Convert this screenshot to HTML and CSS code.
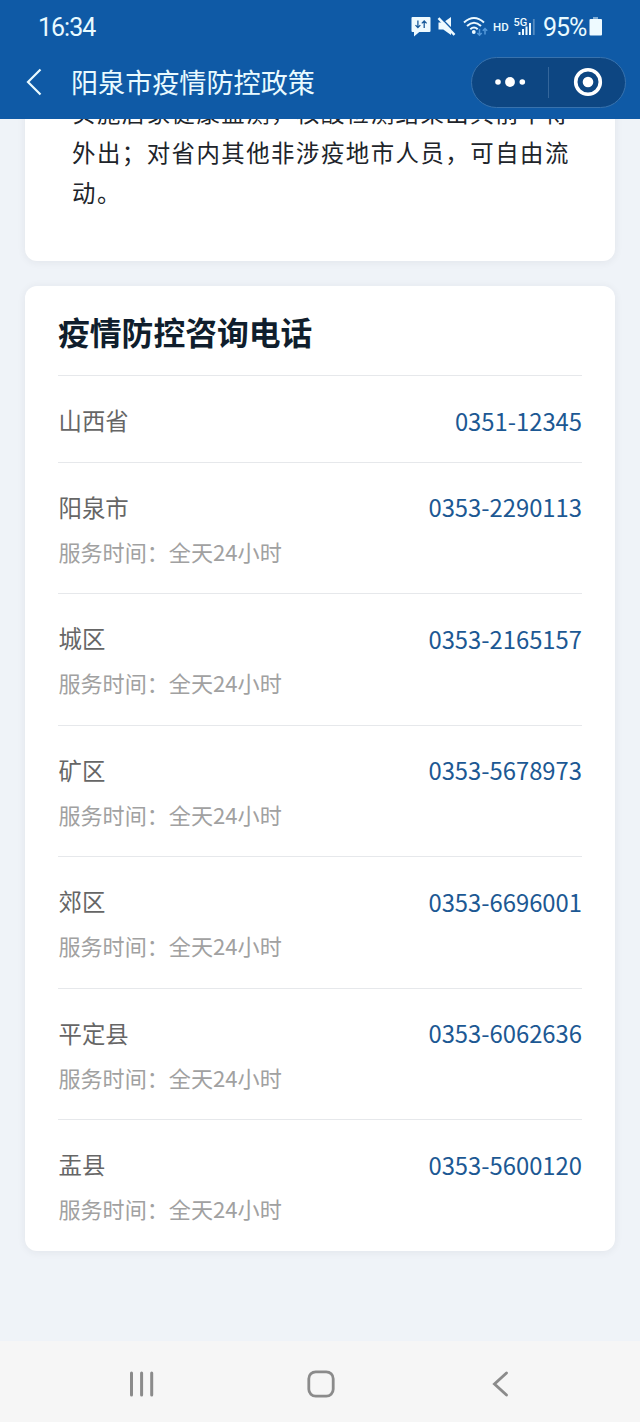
FILE: index.html
```html
<!DOCTYPE html>
<html lang="zh-CN">
<head>
<meta charset="utf-8">
<title>阳泉市疫情防控政策</title>
<link rel="stylesheet" href="styles.css">
</head>
<body>
<div class="screen">
  <header class="header">
    <div class="status">
      <span class="clock">16:34</span>
      <svg class="status-icon message" viewBox="0 0 20 20"><path d="M1.500 0h17q1 0 1 1v13q0 1-1 1H8.300L3 19.500V15H1.500q-1 0-1-1V1q0-1 1-1z" fill="#eefaff"/><path d="M6.900 3.500v7M4.500 8.100l2.400 2.500 2.400-2.500M13.200 11V4M10.800 6.400l2.400-2.500 2.400 2.500" fill="none" stroke="#195a9b" stroke-width="1.300"/></svg>
      <svg class="status-icon mute" viewBox="0 0 18 20"><path d="M.5 5.500h4.800L13 0v18l-7.700-5.500H.5z" fill="#eefaff"/><path d="M1.800-.2L18 16.200" stroke="#0f5aa6" stroke-width="1.600"/><path d="M.5 1.200l16 16.600" stroke="#eefaff" stroke-width="2.500"/></svg>
      <svg class="status-icon wifi" viewBox="0 0 26 20"><g fill="none" stroke="#eefaff" stroke-width="2"><path d="M1 5.500Q11-3.500 21 5.500M4 9q7-6.500 14 0M7.300 12.300q3.700-3.500 7.400 0"/></g><circle cx="10.800" cy="15" r="1.900" fill="#eefaff"/><path d="M16.500 12v6M14.300 16l2.200 2.200L18.700 16M22 17.500v-6M19.800 13.700L22 11.500l2.200 2.200" fill="none" stroke="#5599da" stroke-width="1.500"/></svg>
      <span class="hd">HD</span>
      <svg class="status-icon signal" viewBox="0 0 22 20"><text class="five-g" x="-.5" y="8.500">5G</text><path d="M5.500 15v3M9 12v6M12.500 9.500V18M16 6v12" stroke="#eefaff" stroke-width="2"/><path d="M19.800 2v16" stroke="#568cc0" stroke-width="1.800"/></svg>
      <span class="percent">95%</span>
      <svg class="status-icon battery" viewBox="0 0 14 20"><path d="M4 0h5v3H4z" fill="#82aed5"/><rect x=".5" y="2" width="12.500" height="16.500" rx="1" fill="#eefaff"/></svg>
    </div>
    <div class="nav">
      <svg class="back" viewBox="0 0 16 28"><path d="M14.500 1.500L2 14l12.500 12.500" fill="none" stroke="#e9faff" stroke-width="2.200"/></svg>
      <h1 class="nav-title">阳泉市疫情防控政策</h1>
      <div class="capsule">
        <svg class="more" viewBox="0 0 32 12"><g fill="#fff"><circle cx="4" cy="6" r="2.800"/><circle cx="16" cy="6" r="4.900"/><circle cx="28.300" cy="6" r="2.800"/></g></svg>
        <span class="divider"></span>
        <svg class="close" viewBox="0 0 30 30"><circle cx="15" cy="15" r="12.300" fill="none" stroke="#fff" stroke-width="3.600"/><circle cx="15" cy="15" r="5.300" fill="#fff"/></svg>
      </div>
    </div>
  </header>
  <main class="content">
    <section class="card policy">
      <p class="policy-text">实施居家健康监测，核酸检测结果出具前不得<br>外出；对省内其他非涉疫地市人员，可自由流<br>动。</p>
    </section>
    <section class="card contacts">
      <h2 class="card-title">疫情防控咨询电话</h2>
      <div class="row short"><span class="name">山西省</span><span class="phone">0351-12345</span></div>
      <div class="row"><span class="name">阳泉市</span><span class="phone">0353-2290113</span><span class="hours">服务时间：全天24小时</span></div>
      <div class="row"><span class="name">城区</span><span class="phone">0353-2165157</span><span class="hours">服务时间：全天24小时</span></div>
      <div class="row"><span class="name">矿区</span><span class="phone">0353-5678973</span><span class="hours">服务时间：全天24小时</span></div>
      <div class="row"><span class="name">郊区</span><span class="phone">0353-6696001</span><span class="hours">服务时间：全天24小时</span></div>
      <div class="row"><span class="name">平定县</span><span class="phone">0353-6062636</span><span class="hours">服务时间：全天24小时</span></div>
      <div class="row"><span class="name">盂县</span><span class="phone">0353-5600120</span><span class="hours">服务时间：全天24小时</span></div>
    </section>
  </main>
  <footer class="system-nav">
    <svg class="nav-icon" viewBox="0 0 30 30"><path d="M4.500 4v22M14.600 4v22M24.700 4v22" stroke="#8b8b8b" stroke-width="3" stroke-linecap="round"/></svg>
    <svg class="nav-icon" viewBox="0 0 30 30"><rect x="2.800" y="2.800" width="24.400" height="24.400" rx="7" fill="none" stroke="#8b8b8b" stroke-width="2.800"/></svg>
    <svg class="nav-icon" viewBox="0 0 30 30"><path d="M21.500 4L9.500 15l12 11" fill="none" stroke="#8b8b8b" stroke-width="2.900" stroke-linecap="round"/></svg>
  </footer>
</div>
</body>
</html>
```
FILE: styles.css
```css
* { box-sizing: border-box; }
body { margin: 0; font-family: "Noto Sans CJK SC", sans-serif; background: #eff3f8; }
h1, h2, p { margin: 0; }
svg { display: block; flex: none; overflow: visible; }
.screen { display: flex; flex-direction: column; width: 640px; height: 1422px; overflow: hidden; }
.header { flex: none; height: 119.4px; background: #0f5aa6; color: #e9faff; }
.status { display: flex; align-items: center; height: 54px; padding-left: 38px; font-family: Roboto, sans-serif; }
.clock { width: 373px; padding-top: 1px; font-size: 25px; line-height: 54px; letter-spacing: -1px; }
.status-icon { height: 20px; }
.message { width: 20px; }
.mute { width: 18px; margin-left: 7px; }
.wifi { width: 26px; margin-left: 7px; }
.hd { width: 16px; margin-left: 4px; font-size: 11.5px; font-weight: 500; }
.signal { width: 22px; margin-left: 5px; }
.five-g { font: 500 11px Roboto, sans-serif; fill: #eefaff; }
.percent { width: 43px; margin-left: 7px; font-size: 25px; letter-spacing: -1px; }
.battery { width: 14px; margin-left: 3px; }
.nav { display: flex; align-items: center; height: 56px; padding-left: 26px; }
.back { width: 16px; height: 28px; }
.nav-title { flex: 1; margin-left: 29px; font-size: 27.1px; font-weight: 400; line-height: 40px; white-space: nowrap; }
.capsule { display: flex; align-items: center; width: 155px; height: 51px; margin-right: 14px; padding-left: 22px; border: 1px solid #3872ad; border-radius: 26px; background: #0d4682; }
.more { width: 32px; height: 12px; }
.divider { width: 1px; height: 31px; margin: 0 24px 0 22px; background: #34669b; }
.close { width: 30px; height: 30px; }
.content { display: flex; flex: 1; flex-direction: column; min-height: 0; justify-content: flex-end; padding: 0 25px 89.9px; gap: 25px; overflow: hidden; }
.card { flex: none; border-radius: 12px; background: #fff; box-shadow: 0 1px 8px rgba(40, 45, 55, .07); }
.policy { padding: 30px 0 49.5px 47px; color: #20242a; }
.policy-text { font-size: 23.4px; line-height: 40px; letter-spacing: 1.5px; white-space: nowrap; }
.contacts { height: 965px; padding: 0 33px; }
.card-title { height: 89px; padding-top: 19px; color: #101e2d; font-size: 31.8px; font-weight: 700; line-height: 52px; }
.row { display: grid; grid-template-columns: 1fr auto; grid-template-rows: 40px 34px; row-gap: 7px; align-items: center; height: 131.5px; padding-top: 24px; border-top: 1px solid #e6e8eb; }
.row.short { height: 86.5px; }
.name { padding-left: .6px; color: #666; font-size: 23.4px; }
.phone { color: #1c5893; font-size: 23.8px; }
.hours { padding-left: .4px; color: #a1a1a1; font-size: 22.1px; }
.system-nav { display: flex; flex: none; justify-content: space-between; height: 81px; padding: 27.5px 125px 0 127px; background: #f6f6f6; }
.nav-icon { width: 30px; height: 30px; }
```
